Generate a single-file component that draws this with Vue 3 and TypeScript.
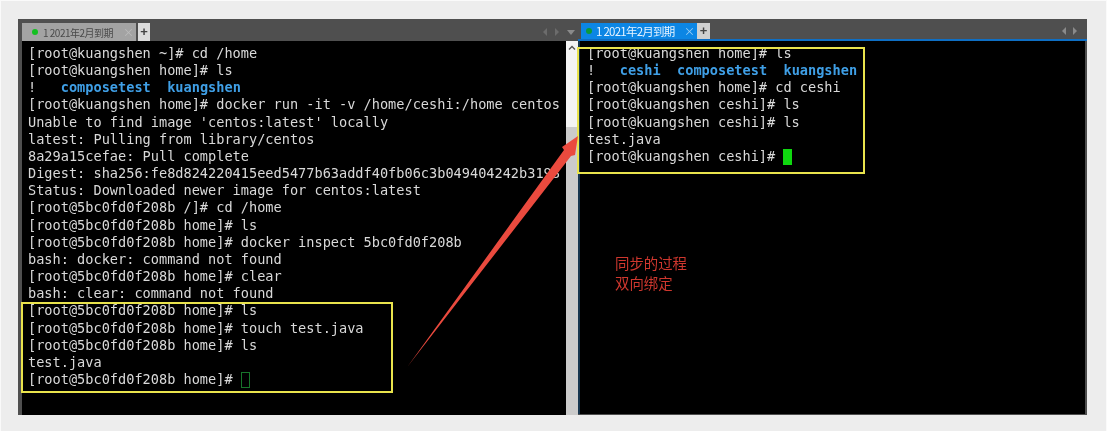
<script setup lang="ts">
const leftTop: string[] = ['[root@kuangshen ~]# cd /home', '[root@kuangshen home]# ls']
const leftMid: string[] = [
  '[root@kuangshen home]# docker run -it -v /home/ceshi:/home centos',
  "Unable to find image 'centos:latest' locally",
  'latest: Pulling from library/centos',
  '8a29a15cefae: Pull complete',
  'Digest: sha256:fe8d824220415eed5477b63addf40fb06c3b049404242b3198',
  'Status: Downloaded newer image for centos:latest',
  '[root@5bc0fd0f208b /]# cd /home',
  '[root@5bc0fd0f208b home]# ls',
  '[root@5bc0fd0f208b home]# docker inspect 5bc0fd0f208b',
  'bash: docker: command not found',
  '[root@5bc0fd0f208b home]# clear',
  'bash: clear: command not found',
  '[root@5bc0fd0f208b home]# ls',
  '[root@5bc0fd0f208b home]# touch test.java',
  '[root@5bc0fd0f208b home]# ls',
  'test.java',
]
const rightMid: string[] = [
  '[root@kuangshen home]# cd ceshi',
  '[root@kuangshen ceshi]# ls',
  '[root@kuangshen ceshi]# ls',
  'test.java',
]
const gapBang = '!   '
const gap = '  '
const promptLeft = '[root@5bc0fd0f208b home]# '
const promptRight = '[root@kuangshen ceshi]# '
</script>

<template>
  <div class="page">
    <div class="window">
      <section class="pane pane-left">
        <header class="tabbar">
          <div class="tab tab-left">
            <i class="dot"></i>
            <span class="tab-text">1 2021年2月到期</span>
            <span class="tab-x">×</span>
          </div>
          <div class="plus">+</div>
          <div class="nav">
            <svg width="18" height="10" viewBox="0 0 18 10"><path d="M5 1 1 5l4 4zM13 1l4 4-4 4z" fill="#6c6c6c" /></svg>
            <svg class="drop" width="8" height="5" viewBox="0 0 8 5"><path d="M0 0h8L4 5z" fill="#8a8a8a" /></svg>
          </div>
        </header>
        <div class="term-row">
          <div class="term term-left">
            <div v-for="l in leftTop" :key="l" class="line">{{ l }}</div>
            <div class="line">{{ gapBang }}<span class="dir">composetest</span>{{ gap }}<span class="dir">kuangshen</span></div>
            <div v-for="l in leftMid" :key="l + 'm'" class="line">{{ l }}</div>
            <div class="line">{{ promptLeft }}<i class="caret hollow"></i></div>
          </div>
          <div class="scrollbar">
            <div class="thumb">
              <svg width="8" height="5" viewBox="0 0 8 5"><path d="M1 4.5 4 1.5l3 3" fill="none" stroke="#555" stroke-width="1.4" /></svg>
            </div>
          </div>
        </div>
      </section>
      <section class="pane pane-right">
        <header class="tabbar tabbar-right">
          <div class="tab tab-right">
            <i class="dot"></i>
            <span class="tab-text">1 2021年2月到期</span>
            <span class="tab-x">×</span>
          </div>
          <div class="plus">+</div>
          <div class="nav">
            <svg width="15" height="10" viewBox="0 0 15 10"><path d="M4 1 0 5l4 4zM11 1l4 4-4 4z" fill="#8a8a8a" /></svg>
          </div>
        </header>
        <div class="term term-right">
          <div class="line">[root@kuangshen home]# ls</div>
          <div class="line">{{ gapBang }}<span class="dir">ceshi</span>{{ gap }}<span class="dir">composetest</span>{{ gap }}<span class="dir">kuangshen</span></div>
          <div v-for="(l, i) in rightMid" :key="i" class="line">{{ l }}</div>
          <div class="line">{{ promptRight }}<i class="caret solid"></i></div>
          <div class="note">同步的过程<br />双向绑定</div>
        </div>
      </section>
      <div class="mark mark-left"></div>
      <div class="mark mark-right"></div>
      <svg class="arrow" width="1069" height="396" viewBox="18 19 1069 396">
        <polygon points="408,366 564,150 562,147 578,136 575,155 571,156" fill="#ea4a3e" />
      </svg>
    </div>
  </div>
</template>

<style>
html, body { margin: 0; background: #fafafa; }
body { padding-top: 1px; }
</style>

<style scoped>
.page {
  box-sizing: border-box;
  width: 1105px;
  height: 430px;
  margin-left: 1px;
  padding: 18px 0 0 17px;
  background: #ededed;
  overflow: hidden;
}
.window {
  position: relative;
  display: flex;
  width: 1069px;
  height: 396px;
  background: #4f4f4f;
  filter: blur(0.35px);
}
.pane { display: flex; flex-direction: column; }
.pane-left { width: 560px; }
.pane-right { flex: 1; }
.tabbar {
  display: flex;
  align-items: flex-end;
  height: 22px;
  flex: none;
  padding-left: 4px;
  background: #4f4f4f;
}
.tabbar-right {
  align-items: flex-start;
  padding-left: 3px;
  border-bottom: 2px solid #0f6fc4;
  height: 20px;
}
.tab {
  display: flex;
  align-items: center;
  box-sizing: border-box;
  height: 18px;
  font-family: "Noto Sans CJK SC", "Noto Sans", sans-serif;
  white-space: nowrap;
}
.tab-left {
  width: 114px;
  padding-left: 10px;
  background: #a3a3a3;
  color: #4a4a4a;
  font-size: 10px;
  letter-spacing: -0.5px;
}
.tab-right {
  width: 116px;
  height: 16px;
  margin-top: 4px;
  padding-left: 5px;
  background: #0c86e4;
  color: #e8f4ff;
  font-size: 11.5px;
  letter-spacing: -0.75px;
}
.dot { width: 6px; height: 6px; border-radius: 50%; background: #13c020; flex: none; }
.tab-left .dot { margin-right: 5px; }
.tab-right .dot { background: #0d9a3c; margin-right: 4px; }
.tab-text { width: 70px; }
.tab-right .tab-text { width: 80px; }
.tab-x { margin-left: 10px; color: #bcbcbc; font-size: 11px; }
.tab-right .tab-x { margin-left: 8px; color: #9ccff5; }
.plus {
  width: 12px;
  height: 18px;
  margin-left: 2px;
  background: #dcdcdc;
  color: #444;
  font: bold 13px/17px "Liberation Sans", sans-serif;
  text-align: center;
}
.tabbar-right .plus {
  width: 13px;
  height: 16px;
  margin: 4px 0 0;
  line-height: 16px;
  background: #d0d0d0;
}
.nav { display: flex; align-items: center; margin-left: auto; height: 18px; margin-right: 3px; }
.tabbar-right .nav { margin-right: 10px; height: 16px; margin-top: 4px; }
.drop { margin-left: 7px; }
.term-row { flex: 1; display: flex; min-height: 0; }
.term {
  box-sizing: border-box;
  overflow: hidden;
  background: #000;
  color: #d9d9d9;
  font-family: "DejaVu Sans Mono", monospace;
  font-size: 13.6px;
  line-height: 17.16px;
  white-space: pre;
  padding-top: 4px;
}
.term-left { margin-left: 4px; width: 539px; padding-left: 6px; }
.line { height: 17.16px; }
.dir { color: #3f9fe6; font-weight: bold; }
.scrollbar {
  flex: 1;
  display: flex;
  flex-direction: column;
  background: #cbcbcb;
  border-left: 5px solid #000;
}
.thumb {
  display: flex;
  justify-content: center;
  height: 86px;
  padding-top: 4px;
  box-sizing: border-box;
  background: #f4f4f4;
}
.term-right {
  position: relative;
  flex: 1;
  margin-right: 2px;
  margin-bottom: 1px;
  padding-left: 7px;
  border-left: 2px solid #17364f;
}
.caret { display: inline-block; box-sizing: border-box; width: 9px; height: 16px; vertical-align: -4px; }
.hollow { border: 1.5px solid #17752a; }
.solid { background: #0fd70f; }
.note {
  position: absolute;
  left: 35px;
  top: 212px;
  color: #cf372e;
  font-family: "Noto Sans CJK SC", sans-serif;
  font-size: 14.4px;
  line-height: 20px;
}
.mark {
  position: absolute;
  box-sizing: border-box;
  border: 2px solid #e9e34c;
  pointer-events: none;
}
.mark-left { left: 3px; top: 283px; width: 372px; height: 91px; }
.mark-right { left: 559px; top: 28px; width: 288px; height: 127px; }
.arrow { position: absolute; left: 0; top: 0; pointer-events: none; }
</style>
